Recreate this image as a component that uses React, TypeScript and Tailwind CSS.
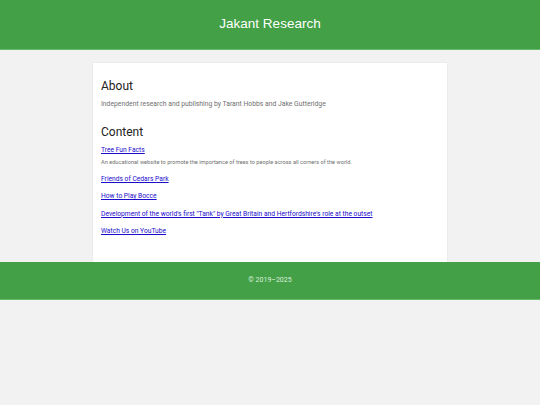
import React from 'react';

const links = [
  { title: 'Tree Fun Facts', desc: 'An educational website to promote the importance of trees to people across all corners of the world.' },
  { title: 'Friends of Cedars Park' },
  { title: 'How to Play Bocce' },
  { title: 'Development of the world\'s first "Tank" by Great Britain and Hertfordshire\'s role at the outset' },
  { title: 'Watch Us on YouTube' },
];

const App = () => {
  return (
    <div className="min-h-[405px] bg-[#f2f2f2] font-['Roboto',sans-serif]">
      <header className="h-[50px] bg-[#43a047] border-b border-[#66bb6a] flex items-center justify-center">
        <h1 className="text-[13.5px] text-white font-['Liberation_Sans',Arial,sans-serif]">Jakant Research</h1>
      </header>

      <main className="pt-[13px]">
        <div className="w-[354px] mx-auto bg-white px-[8px] pt-[16px] h-[199px] shadow-[0_0_2px_rgba(0,0,0,0.08)]">
          <h2 className="text-[12px] leading-[14px] text-[#222]">About</h2>
          <p className="mt-[6px] text-[6.8px] leading-[10px] text-[#707070]">
            Independent research and publishing by Tarant Hobbs and Jake Gutteridge
          </p>

          <h2 className="mt-[16px] text-[12px] leading-[14px] text-[#222]">Content</h2>
          <ul className="mt-[6px]">
            {links.map((l) => (
              <li key={l.title} className="mb-[7.5px]">
                <a href="#" className="text-[6.7px] leading-[10px] text-[#1a0dcc] underline block">
                  {l.title}
                </a>
                {l.desc && (
                  <p className="mt-[3px] text-[5.65px] leading-[8px] text-[#707070]">{l.desc}</p>
                )}
              </li>
            ))}
          </ul>
        </div>
      </main>

      <footer className="h-[38px] bg-[#43a047] border-b border-[#66bb6a] flex items-center justify-center">
        <p className="text-[7px] text-[#dcefdc]">© 2019–2025</p>
      </footer>
    </div>
  );
};

export default App;
